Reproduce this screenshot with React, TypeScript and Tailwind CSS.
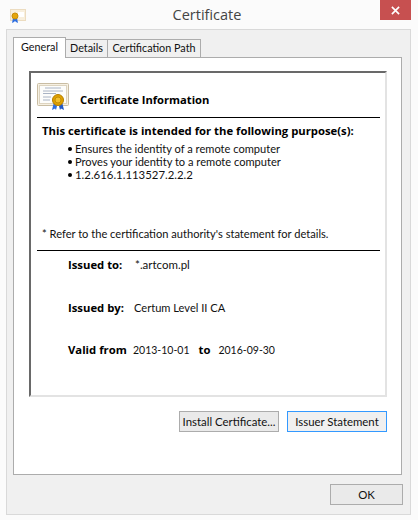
import React from "react";

const font = { fontFamily: 'Lato, "Open Sans", sans-serif' };
const boldFont = "font-['Open_Sans'] font-bold text-black";

const CertIcon: React.FC<{ className?: string }> = ({ className }) => (
  <svg viewBox="0 0 32 28" className={className}>
    <rect x="0.5" y="0.5" width="31" height="22" rx="1" fill="#f6f0e2" stroke="#c9bda3" />
    <rect x="2.5" y="2.5" width="27" height="18" fill="#fdfdfb" stroke="#ddd4c0" />
    <path d="M8 5h16M6 8h20M6 10.500h13M6 14h8M6 17h7" stroke="#aab4c4" strokeWidth="1" />
    <path d="M17 19l-2 8 3-1.500 1 1.500 1-4z" fill="#2f6fe0" />
    <path d="M25 19l2 8-3-1.500-1 1.500-1-4z" fill="#1f58c8" />
    <circle cx="21" cy="17" r="5.500" fill="#e0a100" stroke="#b57f00" />
    <circle cx="21" cy="17" r="3" fill="#f2c02e" stroke="#c48e08" />
  </svg>
);

const SmallCertIcon: React.FC = () => (
  <svg viewBox="0 0 16 14" className="h-[14px] w-4">
    <rect x="0.5" y="0.5" width="15" height="11" fill="#f8efdd" stroke="#ecdcc0" />
    <rect x="8" y="3" width="6" height="5" fill="#ffffff" />
    <path d="M3 9l-1 5 2-1 1-1 1 1 2 1-1-5z" fill="#2f6fe0" />
    <circle cx="5" cy="7" r="3" fill="#e5a50a" stroke="#c88d08" />
  </svg>
);

const Button: React.FC<{ label: string; className: string }> = ({ label, className }) => (
  <button className={`flex items-center justify-center whitespace-nowrap text-[11.400px] text-[#111] ${className}`}>
    {label}
  </button>
);

const Purpose: React.FC<{ text: string; size: string }> = ({ text, size }) => (
  <li className="flex h-[13px] items-center gap-[3px]">
    <span className="h-[4px] w-[4px] rounded-full bg-black" />
    <span className={size}>{text}</span>
  </li>
);

export default function App() {
  return (
    <div className="flex h-[520px] w-[418px] flex-col overflow-hidden bg-[#fbfbfb] text-[11.100px] text-[#111]" style={font}>
      {/* Title bar */}
      <div className="flex h-[29px] shrink-0">
        <div className="flex w-[380px] items-start pl-[10px] pt-[9px]">
          <SmallCertIcon />
          <div className="flex-1 pr-[2px] text-center font-['Open_Sans'] text-[14.500px] leading-[12px] text-[#444]">
            <span className="relative left-[5px]">Certificate</span>
          </div>
        </div>
        <div className="flex h-[20px] w-[31px] items-center justify-center bg-[#c75050]">
          <svg viewBox="0 0 10 10" className="h-[9px] w-[9px]">
            <path d="M1 1l8 8M9 1l-8 8" stroke="#fff" strokeWidth="1.800" />
          </svg>
        </div>
      </div>

      {/* Dialog body */}
      <div className="mx-[6px] flex h-[486px] w-[405px] flex-col border border-[#d9d9d9] bg-[#f0f0f0] px-[6px] pt-[7px]">
        {/* Tabs */}
        <div className="relative z-10 flex h-[20px] items-start whitespace-nowrap text-[10.800px]">
          <div className="flex h-[21px] w-[53px] items-center justify-center border border-b-0 border-[#acacac] bg-white pb-[1px]">General</div>
          <div className="mt-[2px] flex h-[19px] w-[42px] items-center justify-center border border-l-0 border-[#acacac] bg-[#f0f0f0]">Details</div>
          <div className="mt-[2px] flex h-[19px] w-[93px] items-center justify-center border border-l-0 border-[#acacac] bg-[#f0f0f0]">Certification Path</div>
        </div>

        {/* Tab page */}
        <div className="flex h-[418px] w-[389px] flex-col border border-[#acacac] bg-white pl-[15px] pt-[13px]">
          <div className="flex h-[326px] w-[358px] flex-col border-2 border-b-[#e3e3e3] border-l-[#696969] border-r-[#e3e3e3] border-t-[#696969] bg-white pl-[6px]">
            <div className="flex h-[45px] w-[343px] items-end border-b border-black">
              <CertIcon className="mb-[6px] h-[28px] w-[32px]" />
              <span className={`mb-[10px] ml-[11px] text-[11.200px] leading-[14px] ${boldFont}`}>Certificate Information</span>
            </div>
            <div className={`pl-[5px] pt-[6px] text-[11.300px] leading-[14px] ${boldFont}`}>
              This certificate is intended for the following purpose(s):
            </div>
            <ul className="mt-[4px] flex flex-col pl-[31px] leading-[13px]">
              <Purpose text="Ensures the identity of a remote computer" size="text-[11.100px]" />
              <Purpose text="Proves your identity to a remote computer" size="text-[11.100px]" />
              <Purpose text="1.2.616.1.113527.2.2.2" size="text-[11.400px]" />
            </ul>
            <div className="mt-[46px] pl-[5px] leading-[14px]">* Refer to the certification authority's statement for details.</div>
            <div className="mt-[9px] w-[343px] border-t border-black" />
            <div className="flex flex-col pl-[31px] pt-[7px] leading-[14px]">
              <div className="flex h-[14px]">
                <span className={`w-[67px] text-[11.300px] ${boldFont}`}>Issued to:</span>
                <span className="text-[11.500px]">*.artcom.pl</span>
              </div>
              <div className="mt-[29px] flex h-[14px]">
                <span className={`w-[66px] text-[11.300px] ${boldFont}`}>Issued by:</span>
                <span>Certum Level II CA</span>
              </div>
              <div className="mt-[28px] flex h-[14px]">
                <span className={`w-[65px] text-[11.300px] ${boldFont}`}>Valid from</span>
                <span className="text-[10.500px]">2013-10-01</span>
                <span className={`ml-[9px] mr-[8px] text-[11.300px] ${boldFont}`}>to</span>
                <span className="text-[10.500px]">2016-09-30</span>
              </div>
            </div>
          </div>

          <div className="mt-[14px] flex w-[358px] justify-end gap-[8px]">
            <Button label="Install Certificate..." className="h-[21px] w-[100px] border border-[#acacac] bg-[#eaeaea]" />
            <Button label="Issuer Statement" className="h-[21px] w-[100px] border border-[#3399ff] bg-[#f0f0f0]" />
          </div>
        </div>

        <div className="mt-[9px] flex w-[390px] justify-end">
          <Button label="OK" className="h-[21px] w-[73px] border border-[#acacac] bg-[#eaeaea]" />
        </div>
      </div>
    </div>
  );
}
